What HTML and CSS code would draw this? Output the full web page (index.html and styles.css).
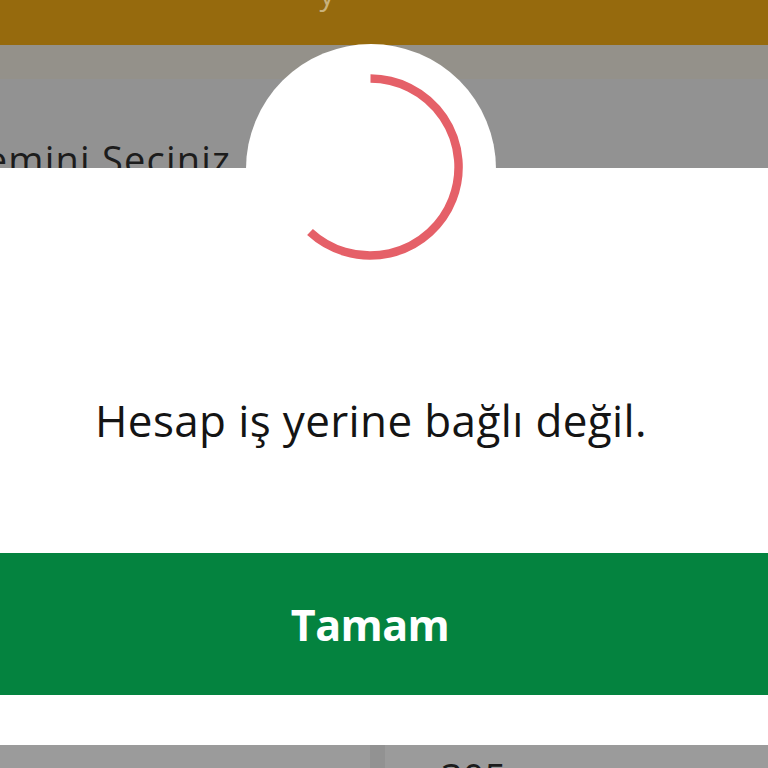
FILE: index.html
```html
<!DOCTYPE html>
<html lang="tr">
<head>
<meta charset="utf-8">
<title>Hesap</title>
<link rel="stylesheet" href="styles.css">
</head>
<body>
<div class="page">
  <header class="topbar"><span class="topbar-text">y</span></header>
  <div class="band"></div>
  <section class="heading-row"><h1 class="heading">Sistemini Seçiniz</h1></section>
  <main class="dialog">
    <div class="badge">
      <svg class="spinner" viewBox="0 0 250 250" width="250" height="250" aria-hidden="true">
        <path d="M124.5 34.5A88.5 88.5 0 1 1 64 188" fill="none" stroke="#e56068" stroke-width="8.5"/>
      </svg>
    </div>
    <p class="message">Hesap iş yerine bağlı değil.</p>
    <button class="ok" type="button">Tamam</button>
  </main>
  <footer class="bottom">
    <div class="cell"></div>
    <div class="cell cell-right"><span class="amount">305</span></div>
  </footer>
</div>
</body>
</html>
```

FILE: styles.css
```css
* { box-sizing: border-box; }
html, body { margin: 0; padding: 0; }
body { background: #fff; font-family: "Open Sans", "Noto Sans", sans-serif; }
.page {
  width: 768px;
  height: 768px;
  overflow: hidden;
  display: flex;
  flex-direction: column;
  position: relative;
}
.topbar {
  height: 45px;
  flex: none;
  background: #966a0d;
  overflow: hidden;
  display: flex;
  justify-content: center;
  padding-right: 114px;
}
.topbar-text {
  color: #c9b27c;
  font-size: 30px;
  line-height: 30px;
  margin-top: -21px;
}
.band { height: 34px; flex: none; background: #94918a; }
.heading-row {
  height: 89px;
  flex: none;
  background: #929292;
  overflow: hidden;
  position: relative;
}
.heading {
  position: absolute;
  margin: 0;
  right: 537px;
  top: 58px;
  white-space: nowrap;
  font-size: 38px;
  line-height: 44px;
  letter-spacing: 1.2px;
  font-weight: 400;
  color: #1c1c1c;
}
.dialog {
  height: 577px;
  flex: none;
  background: #fff;
  display: flex;
  flex-direction: column;
  align-items: center;
  position: relative;
}
.badge {
  position: absolute;
  top: -124px;
  left: 246px;
  width: 250px;
  height: 250px;
  border-radius: 50%;
  background: #fff;
}
.spinner { display: block; }
.message {
  margin: 222px 26px 0 0;
  height: 60px;
  line-height: 60px;
  font-size: 44px;
  letter-spacing: 0.37px;
  font-weight: 400;
  color: #141414;
  white-space: nowrap;
}
.ok {
  margin-top: 103px;
  width: 100%;
  height: 142px;
  border: 0;
  padding: 0 28px 0 0;
  background: #04833f;
  color: #fff;
  font-family: inherit;
  font-size: 43px;
  font-weight: 700;
  letter-spacing: -0.6px;
}
.bottom {
  height: 23px;
  flex: none;
  display: flex;
  background: #9b9b9b;
}
.cell { width: 370px; flex: none; }
.cell-right {
  width: 398px;
  border-left: 15px solid #929292;
  overflow: hidden;
  position: relative;
}
.amount {
  position: absolute;
  left: 56px;
  top: 12px;
  font-size: 38px;
  line-height: 40px;
  color: #1c1c1c;
}
```
